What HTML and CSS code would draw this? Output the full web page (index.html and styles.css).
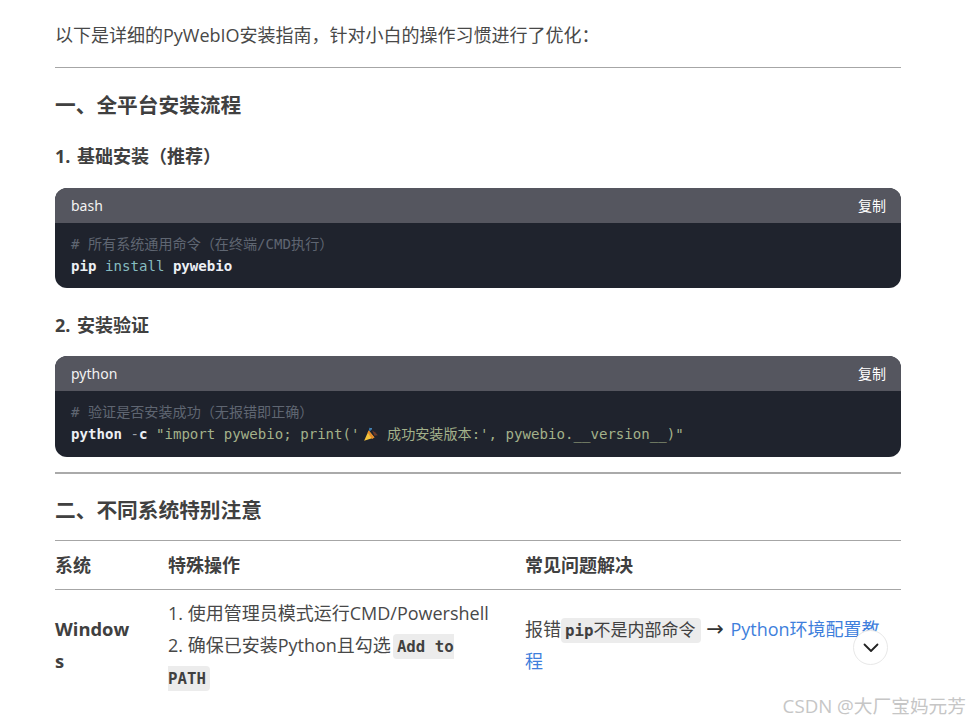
FILE: index.html
```html
<!DOCTYPE html>
<html lang="zh-CN">
<head>
<meta charset="utf-8">
<title>PyWebIO安装指南</title>
<link rel="stylesheet" href="styles.css">
</head>
<body>
<main class="page">
  <p class="intro">以下是详细的PyWebIO安装指南，针对小白的操作习惯进行了优化：</p>
  <hr class="rule">
  <h2 class="h2 first">一、全平台安装流程</h2>
  <h3 class="h3">1. 基础安装（推荐）</h3>
  <section class="code">
    <header class="code-head"><span>bash</span><span class="copy">复制</span></header>
    <pre class="code-body"><span class="cm"># 所有系统通用命令（在终端/CMD执行）</span>
<b class="cmd">pip</b> <span class="kw">install</span> <b class="cmd">pywebio</b></pre>
  </section>
  <h3 class="h3 second">2. 安装验证</h3>
  <section class="code tall">
    <header class="code-head"><span>python</span><span class="copy">复制</span></header>
    <pre class="code-body"><span class="cm"># 验证是否安装成功（无报错即正确）</span>
<b class="cmd">python</b> <span class="op">-</span><b class="cmd">c</b> <span class="str">"import pywebio; print('<svg class="party" viewBox="0 0 14 14" aria-hidden="true"><path d="M1 13 5 4l5 6z" fill="#f5c33b"/><path d="M5 4l5 6-2 1.3L4 5.6z" fill="#e58a2c"/><path d="M5.2 1.2 7 4 5.5 4.3z" fill="#3b88c3"/><path d="M8 4l2.5 1.5L13 8l-3 .5z" fill="#6b3a2a"/><circle cx="7" cy="2.5" r=".8" fill="#55acee"/></svg> 成功安装版本:', pywebio.__version__)"</span></pre>
  </section>
  <hr class="rule thick">
  <h2 class="h2">二、不同系统特别注意</h2>
  <table class="table">
    <colgroup><col class="c1"><col class="c2"><col class="c3"></colgroup>
    <thead>
      <tr><th>系统</th><th>特殊操作</th><th>常见问题解决</th></tr>
    </thead>
    <tbody>
      <tr>
        <td class="os">Windows</td>
        <td class="ops">1. 使用管理员模式运行CMD/Powershell<br>2. 确保已安装Python且勾选<code>Add to PATH</code></td>
        <td class="fix">报错<code>pip<span class="code-cjk">不是内部命令</span></code> <span class="arrow">→</span> <a href="#">Python环境配置教程</a></td>
      </tr>
    </tbody>
  </table>
</main>
<button class="down" type="button" aria-label="向下滚动">
  <svg viewBox="0 0 16 10" width="16" height="10" aria-hidden="true"><path d="M1.5 1.5 8 8l6.5-6.5" fill="none" stroke="#222" stroke-width="1.8" stroke-linecap="round" stroke-linejoin="round"/></svg>
</button>
<div class="mark">CSDN @大厂宝妈元芳</div>
</body>
</html>
```
FILE: styles.css
```css
* { box-sizing: border-box; }
html, body { margin: 0; height: 723px; overflow: hidden; background: #fff; }
body {
  position: relative;
  font-family: "Open Sans", "Noto Sans CJK SC", sans-serif;
  color: #404040;
}
.page { width: 970px; padding: 0 69px 0 55px; }
.intro { margin: 0; padding-top: 22px; font-size: 18px; line-height: 27px; font-weight: 400; color: #484848; }
.rule { margin: 18px 0 0; border: 0; border-top: 1px solid #a6a6a6; }
.rule.thick { margin-top: 15px; border-top: 2px solid #aaa; }
.h2 { margin: 22px 0 0; font-size: 20.7px; line-height: 28px; font-weight: 700; }
.h2.first { margin-top: 23px; }
.h3 { margin: 24px 0 0; font-size: 18px; line-height: 26px; font-weight: 700; word-spacing: 2px; }
.h3.second { margin: 24px 0 0; }
.code { margin-top: 19px; border-radius: 12px; overflow: hidden; background: #1f232d; }
.h3.second + .code { margin-top: 18px; }
.code-head {
  display: flex; justify-content: space-between; align-items: center;
  height: 35px; padding: 0 15px 0 16px;
  background: #55565f; color: #f2f2f2;
  font-family: "Noto Sans", "Noto Sans CJK SC", sans-serif;
  font-size: 14px;
}
.copy { margin-top: -2px; font-size: 14px; font-weight: 400; color: #fff; }
.code-body {
  margin: 0; padding: 10px 16px 11px;
  font-family: "DejaVu Sans Mono", "Noto Sans CJK SC", monospace;
  font-size: 14.1px; line-height: 22px; color: #e8e8e8; white-space: pre;
}
.tall .code-body { padding-bottom: 12px; }
.cm { color: #5f6672; }
.cmd { color: #eceff4; font-weight: 700; }
.kw { color: #86bcc0; }
.op { color: #9aa0a8; }
.str { color: #a3b18a; }
.party { width: 16px; height: 16px; margin: 0 0 0 3px; vertical-align: -3px; }
.table { width: 846px; margin-top: 16px; border-collapse: collapse; table-layout: fixed; font-size: 18px; }
.c1 { width: 113px; } .c2 { width: 357px; } .c3 { width: 376px; }
th {
  height: 49px; padding: 0 0 3px; text-align: left; font-size: 18px; font-weight: 700;
  border-top: 1px solid #a6a6a6; border-bottom: 1px solid #a6a6a6;
}
td { padding: 7px 0; line-height: 32px; font-weight: 400; vertical-align: middle; color: #484848; }
td.os { font-size: 18.4px; font-weight: 700; word-break: break-all; padding-right: 36px; color: #404040; }
td.ops { padding-right: 28px; }
td.fix { padding-right: 16px; }
td.ops code { margin-left: 2px; }
code {
  padding: 3px 4px; border-radius: 4px; background: #ececec; line-height: 1;
  -webkit-box-decoration-break: slice; box-decoration-break: slice;
  font-family: "DejaVu Sans Mono", "Noto Sans CJK SC", monospace;
  font-size: 15.75px; font-weight: 700; color: #404040;
}
.code-cjk { font-size: 17px; font-weight: 400; padding-right: 2px; }
.arrow { margin-right: 2px; line-height: 1; font-family: "DejaVu Sans", sans-serif; font-weight: 400; font-size: 21px; color: #333; }
a { color: #3f7fdc; text-decoration: none; }
.down {
  position: absolute; left: 853px; top: 630px; width: 35px; height: 35px; padding: 0;
  display: flex; align-items: center; justify-content: center;
  border: 1px solid #e8e8e8; border-radius: 50%; background: #fff;
}
.mark {
  position: absolute; right: 4px; top: 691px;
  font-family: "Open Sans", "Noto Sans CJK SC", sans-serif; font-size: 18.7px; font-weight: 400; color: #c6c6c6;
}
```
